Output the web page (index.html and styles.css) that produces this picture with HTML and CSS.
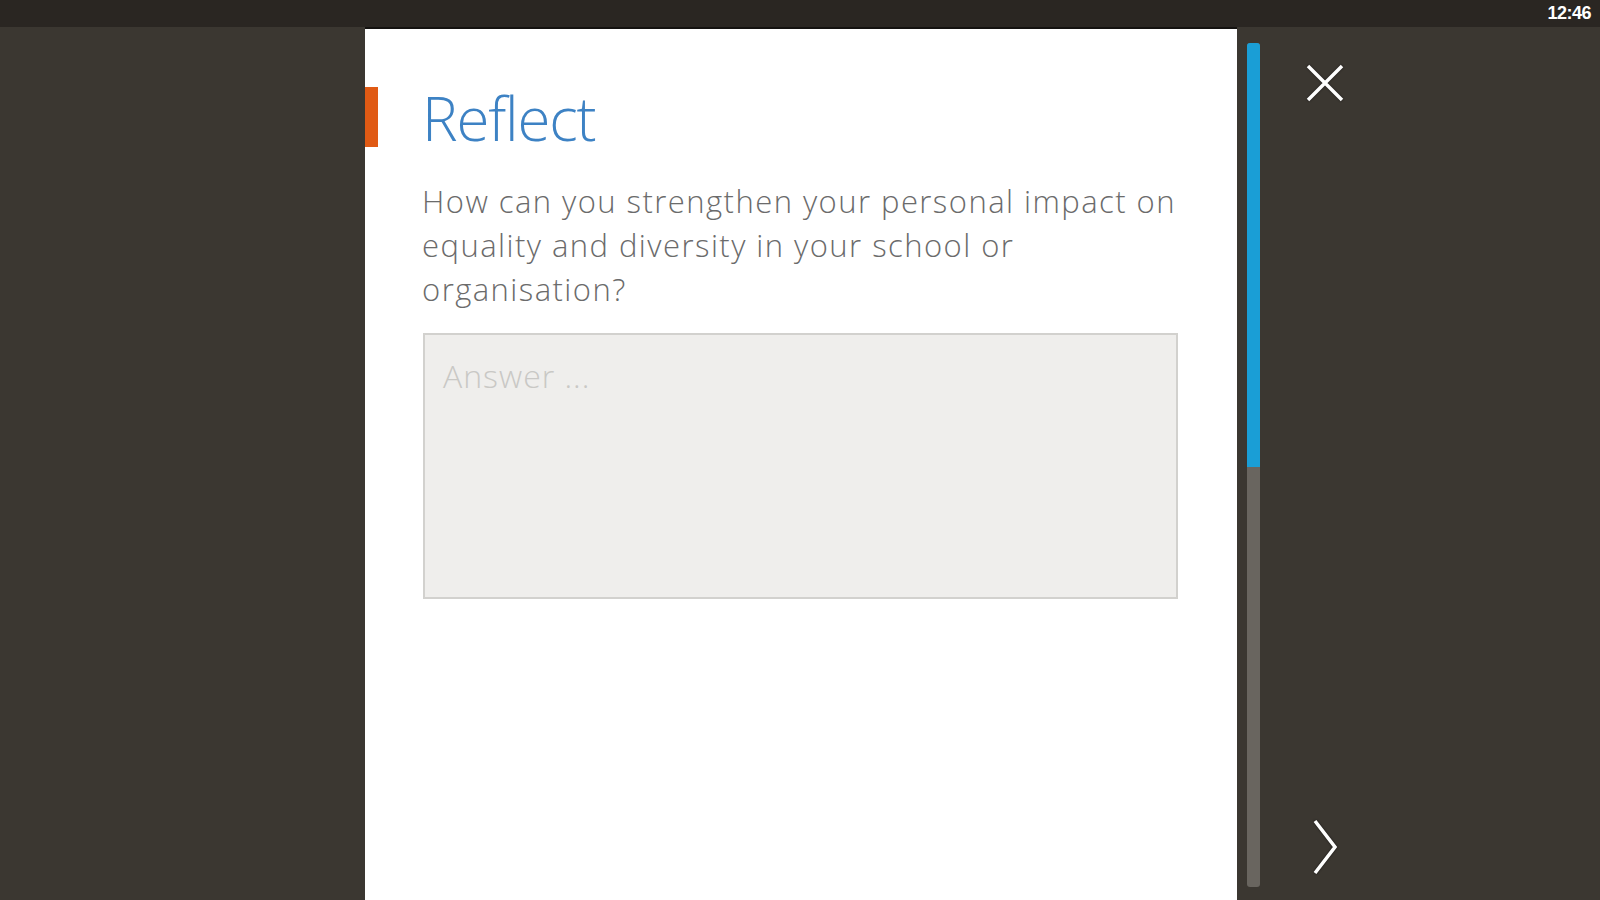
FILE: index.html
```html
<!DOCTYPE html>
<html>
    <head>
        <title>Reflect</title>
        <link rel="stylesheet" href="styles.css">
    </head>
    <body>
        <div class="statusbar">
            <span class="clock">12:46</span>
        </div>

        <div class="screen">
            <div class="gutter"></div>

            <!-- Reflection card -->
            <main class="card">
                <div class="title-row">
                    <span class="accent"></span>
                    <h1 class="title">Reflect</h1>
                </div>
                <p class="question">How can you strengthen your personal impact on equality and diversity in your school or organisation?</p>
                <textarea class="answer" placeholder="Answer ..."></textarea>
            </main>

            <div class="scroll">
                <div class="scroll-thumb"></div>
            </div>

            <!-- Close / next controls -->
            <aside class="controls">
                <button class="icon-btn close" aria-label="Close">
                    <svg width="40" height="40" viewBox="0 0 40 40">
                        <path d="M3 3 L37 37 M37 3 L3 37" />
                    </svg>
                </button>
                <button class="icon-btn next" aria-label="Next">
                    <svg width="28" height="56" viewBox="0 0 28 56">
                        <path d="M4 2 L24 28 L4 54" />
                    </svg>
                </button>
            </aside>
        </div>
    </body>
</html>
```

FILE: styles.css
```css
body {
    margin: 0;
    height: 100vh;
    overflow: hidden;
    background-color: #3b3731;
    font-family: "Open Sans", "Liberation Sans", sans-serif;
    display: flex;
    flex-direction: column;
}
.statusbar {
    height: 27px;
    background-color: #2a2622;
    display: flex;
    justify-content: flex-end;
    align-items: center;
    padding-right: 9px;
    flex-shrink: 0;
}
.clock {
    font-family: "Liberation Sans", Arial, sans-serif;
    font-weight: bold;
    font-size: 18px;
    letter-spacing: -0.5px;
    color: white;
}
.screen {
    flex: 1;
    display: flex;
    min-height: 0;
}
.gutter {
    width: 365px;
    flex-shrink: 0;
}
.card {
    width: 872px;
    flex-shrink: 0;
    background-color: white;
    border-top: 2px solid #141210;
    box-sizing: border-box;
    padding-top: 58px;
}
.title-row {
    display: flex;
    align-items: center;
    height: 60px;
}
.accent {
    width: 13px;
    height: 60px;
    background-color: #e05a14;
    margin-right: 44px;
}
.title {
    margin: 0;
    padding-top: 2px;
    font-size: 60px;
    line-height: 60px;
    font-weight: 300;
    color: #3d82c4;
    letter-spacing: -1.2px;
}
.question {
    margin: 32px 0 0 57px;
    width: 762px;
    font-size: 31px;
    line-height: 44px;
    font-weight: 300;
    color: #6b6b6b;
    letter-spacing: 1.45px;
}
.answer {
    display: block;
    margin: 22px 0 0 58px;
    width: 755px;
    height: 266px;
    box-sizing: border-box;
    border: 2px solid #d2d1ce;
    background-color: #efeeec;
    padding: 19px 18px;
    font-family: "Open Sans", "Liberation Sans", sans-serif;
    font-size: 32px;
    line-height: 43px;
    font-weight: 300;
    letter-spacing: 1px;
    color: #6b6b6b;
    resize: none;
    outline: none;
}
.answer::placeholder {
    color: #c9c8c5;
}
.scroll {
    width: 13px;
    margin: 16px 0 13px 10px;
    background-color: #69655f;
    border-radius: 3px;
    flex-shrink: 0;
}
.scroll-thumb {
    height: 424px;
    background-color: #1a9ed6;
    border-radius: 3px 3px 0 0;
}
.controls {
    width: 130px;
    display: flex;
    flex-direction: column;
    justify-content: space-between;
    align-items: center;
    padding: 36px 0 25px;
    box-sizing: border-box;
}
.icon-btn {
    background: transparent;
    border: none;
    padding: 0;
    cursor: pointer;
    display: block;
}
.icon-btn svg {
    display: block;
    fill: none;
    stroke: white;
    stroke-width: 3.5px;
    filter: drop-shadow(0 0 1px rgba(0, 0, 0, 0.6));
}
```
